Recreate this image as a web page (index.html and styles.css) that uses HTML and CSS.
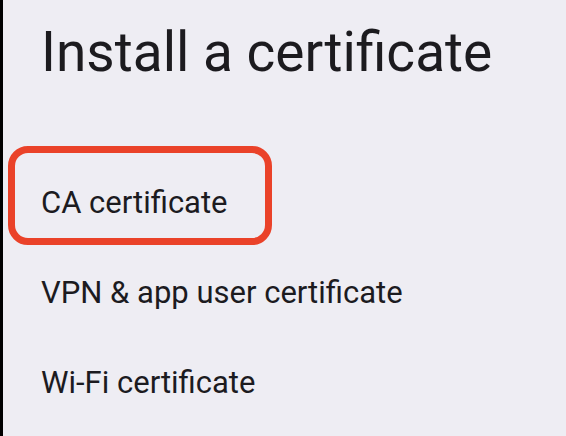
FILE: index.html
```html
<!DOCTYPE html>
<html>
<head>
<meta charset="utf-8">
<link rel="stylesheet" href="styles.css">
</head>
<body>
<div class="screen">
  <h1 class="title">Install a certificate</h1>
  <ul class="list">
    <li class="item item-highlighted">CA certificate<span class="highlight"></span></li>
    <li class="item">VPN &amp; app user certificate</li>
    <li class="item">Wi-Fi certificate</li>
  </ul>
</div>
</body>
</html>
```
FILE: styles.css
```css
html, body {
  margin: 0;
  padding: 0;
  height: 100%;
}
body {
  background: #000;
  font-family: Roboto, "Noto Sans", sans-serif;
  overflow: hidden;
}
.screen {
  margin-left: 3px;
  height: 100%;
  background: #eeedf3;
  padding: 20px 0 0 38px;
  box-sizing: border-box;
  color: #1c1b1f;
}
.title {
  margin: 0;
  font-size: 55px;
  font-weight: 400;
  line-height: 64px;
}
.list {
  list-style: none;
  margin: 74px 0 0 0;
  padding: 0;
}
.item {
  position: relative;
  font-size: 31px;
  line-height: 90px;
  height: 90px;
}
.highlight {
  position: absolute;
  left: -33px;
  top: -12px;
  width: 264px;
  height: 99px;
  box-sizing: border-box;
  border: 7px solid #ea4229;
  border-radius: 20px;
}
```
